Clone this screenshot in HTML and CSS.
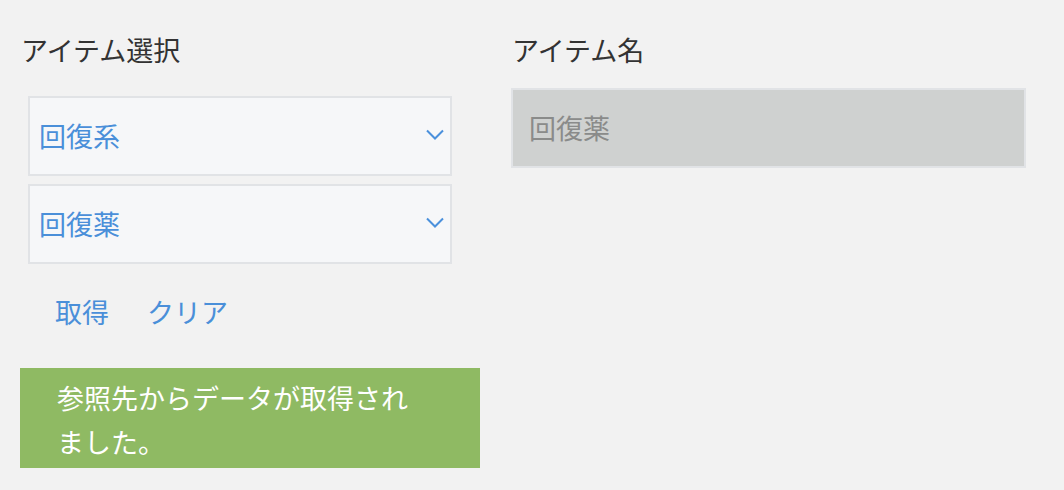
FILE: index.html
```html
<!DOCTYPE html>
<html lang="ja">
<head>
<meta charset="utf-8">
<title>アイテム選択</title>
<link rel="stylesheet" href="styles.css">
</head>
<body>
<div class="page">
  <section class="col-left">
    <div class="label">アイテム選択</div>
    <div class="selects">
      <div class="select">
        <span class="select-text">回復系</span>
        <svg class="chev" width="18" height="11" viewBox="0 0 18 11"><path d="M1 1.5 L9 9.5 L17 1.5" fill="none" stroke="#4a90dc" stroke-width="2"/></svg>
      </div>
      <div class="select">
        <span class="select-text">回復薬</span>
        <svg class="chev" width="18" height="11" viewBox="0 0 18 11"><path d="M1 1.5 L9 9.5 L17 1.5" fill="none" stroke="#4a90dc" stroke-width="2"/></svg>
      </div>
    </div>
    <div class="buttons">
      <button class="btn">取得</button>
      <button class="btn">クリア</button>
    </div>
    <div class="notice">参照先からデータが取得されました。</div>
  </section>
  <section class="col-right">
    <div class="label">アイテム名</div>
    <div class="field">回復薬</div>
  </section>
</div>
</body>
</html>
```

FILE: styles.css
```css
* { box-sizing: border-box; }
html, body { margin: 0; padding: 0; }
body {
  background: #f2f2f2;
  font-family: "Noto Sans CJK JP", "Noto Sans", sans-serif;
  font-size: 27px;
  color: #333333;
}
.page {
  display: flex;
  gap: 31px;
  padding: 30px 0 0 20px;
}
.col-left { width: 460px; display: flex; flex-direction: column; }
.col-right { width: 515px; display: flex; flex-direction: column; }
.label {
  height: 40px;
  line-height: 40px;
  padding-left: 1px;
  color: #333333;
}
.selects {
  margin: 26px 0 0 8px;
  width: 424px;
  display: flex;
  flex-direction: column;
  gap: 8px;
}
.select {
  height: 80px;
  border: 2px solid #e1e3e6;
  background: #f6f7f9;
  display: flex;
  align-items: center;
  justify-content: space-between;
  padding: 0 6px 0 9px;
  color: #4a8fd9;
}
.select-text { line-height: 40px; }
.chev { display: block; margin-top: -3px; }
.buttons {
  display: flex;
  margin: 26px 0 0 16px;
  height: 44px;
}
.btn {
  font: inherit;
  color: #4a8fd9;
  background: none;
  border: none;
  padding: 0 19px;
  line-height: 44px;
  height: 44px;
  cursor: pointer;
}
.notice {
  margin-top: 34px;
  width: 460px;
  height: 100px;
  background: #8fba63;
  color: #ffffff;
  padding: 8px 50px 4px 37px;
  line-height: 44px;
}
.field {
  margin-top: 18px;
  height: 80px;
  border: 2px solid #e1e3e6;
  background: #cfd1d0;
  color: #8a8b8a;
  display: flex;
  align-items: center;
  padding-left: 16px;
  line-height: 40px;
}
```
